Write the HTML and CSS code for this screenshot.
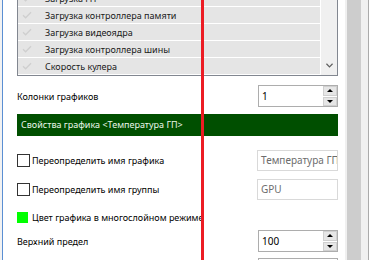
FILE: index.html
```html
<!DOCTYPE html>
<html lang="ru">
<head>
  <meta charset="UTF-8" />
  <meta name="viewport" content="width=device-width, initial-scale=1.0" />
  <title>Свойства графика</title>
  <link rel="stylesheet" href="styles.css">
</head>
<body>
  <div class="window">
    <div class="frame-left"></div>

    <div class="panel">
      <div class="list">
        <div class="list-rows">
          <div class="list-row">
            <svg class="tick" viewBox="0 0 10 8"><path d="M1 4.2 L3.6 6.8 L9 1.2" /></svg>
            <span>Загрузка ГП</span>
          </div>
          <div class="list-row">
            <svg class="tick" viewBox="0 0 10 8"><path d="M1 4.2 L3.6 6.8 L9 1.2" /></svg>
            <span>Загрузка контроллера памяти</span>
          </div>
          <div class="list-row">
            <svg class="tick" viewBox="0 0 10 8"><path d="M1 4.2 L3.6 6.8 L9 1.2" /></svg>
            <span>Загрузка видеоядра</span>
          </div>
          <div class="list-row">
            <svg class="tick" viewBox="0 0 10 8"><path d="M1 4.2 L3.6 6.8 L9 1.2" /></svg>
            <span>Загрузка контроллера шины</span>
          </div>
          <div class="list-row">
            <svg class="tick" viewBox="0 0 10 8"><path d="M1 4.2 L3.6 6.8 L9 1.2" /></svg>
            <span>Скорость кулера</span>
          </div>
        </div>
        <div class="list-scroll">
          <svg class="chevron" viewBox="0 0 8 5"><path d="M0.5 0.5 L4 4 L7.5 0.5" /></svg>
        </div>
      </div>

      <div class="field-row row-columns">
        <span class="label">Колонки графиков</span>
        <div class="spin">
          <span class="spin-value">1</span>
          <div class="spin-buttons">
            <span class="spin-btn"><span class="arrow-up"></span></span>
            <span class="spin-btn"><span class="arrow-down"></span></span>
          </div>
        </div>
      </div>

      <div class="section-header">Свойства графика &lt;Температура ГП&gt;</div>

      <div class="field-row row-name">
        <label class="check"><span class="box"></span>Переопределить имя графика</label>
        <div class="textbox disabled">Температура ГП</div>
      </div>

      <div class="field-row row-group">
        <label class="check"><span class="box"></span>Переопределить имя группы</label>
        <div class="textbox disabled">GPU</div>
      </div>

      <div class="field-row row-color">
        <span class="check"><span class="swatch"></span>Цвет графика в многослойном режиме</span>
      </div>

      <div class="field-row row-upper">
        <span class="label">Верхний предел</span>
        <div class="spin">
          <span class="spin-value">100</span>
          <div class="spin-buttons">
            <span class="spin-btn"><span class="arrow-up"></span></span>
            <span class="spin-btn"><span class="arrow-down"></span></span>
          </div>
        </div>
      </div>

      <div class="field-row row-next">
        <span class="label"></span>
        <div class="spin"></div>
      </div>
    </div>

    <div class="vscroll"><div class="thumb"></div></div>
    <div class="frame-right"></div>

    <div class="red-line"></div>
  </div>
</body>
</html>
```

FILE: styles.css
```css
body {
  margin: 0;
  background: #fff;
  font-family: 'Noto Sans', sans-serif;
  font-size: 9px;
  color: #000;
}
.window {
  position: relative;
  display: flex;
  height: 260px;
  overflow: hidden;
}
.frame-left {
  width: 2px;
  background: #f2f2f2;
  border-right: 1px solid #5b8fd3;
}
.panel {
  width: 321px;
  padding: 0 7px 0 14px;
  display: flex;
  flex-direction: column;
}

/* list with counters */
.list {
  margin-top: -11px;
  height: 85px;
  display: flex;
  border: 1px solid #828790;
  background: #fff;
  flex-shrink: 0;
}
.list-rows {
  flex: 1;
}
.list-row {
  height: 16px;
  margin-bottom: 1px;
  margin-right: 1px;
  background: #e5e5e5;
  display: flex;
  align-items: center;
  color: #1a1a1a;
}
.tick {
  width: 10px;
  height: 8px;
  margin: 0 13px 0 4px;
  fill: none;
  stroke: #cfcfcf;
  stroke-width: 1.3;
}
.list-scroll {
  width: 16px;
  background: #f0f0f0;
  display: flex;
  align-items: flex-end;
  justify-content: center;
}
.chevron {
  width: 7px;
  height: 5px;
  margin-bottom: 7px;
  fill: none;
  stroke: #606060;
  stroke-width: 1.4;
}

/* form rows */
.field-row {
  display: flex;
  align-items: center;
  justify-content: space-between;
  flex-shrink: 0;
}
.row-columns { margin-top: 9px; height: 22px; }
.row-name { margin-top: 14px; height: 21px; }
.row-group { margin-top: 8px; height: 21px; }
.row-color { margin-top: 7px; height: 20px; }
.row-upper { margin-top: 3px; height: 22px; }
.row-next { margin-top: 6px; height: 22px; }

.section-header {
  margin-top: 7px;
  height: 22px;
  line-height: 22px;
  padding-left: 4px;
  background: #004f00;
  color: #eaf6ea;
  flex-shrink: 0;
}

.spin {
  width: 78px;
  height: 20px;
  border: 1px solid #adadad;
  background: #fff;
  display: flex;
  align-items: center;
}
.spin-value {
  flex: 1;
  padding-left: 3px;
  font-size: 10px;
}
.spin-buttons {
  width: 14px;
  height: 20px;
  display: flex;
  flex-direction: column;
  gap: 1px;
}
.spin-btn {
  flex: 1;
  background: #e6e6e6;
  border: 1px solid #d0d0d0;
  display: flex;
  align-items: center;
  justify-content: center;
}
.arrow-up {
  border-left: 3px solid transparent;
  border-right: 3px solid transparent;
  border-bottom: 3px solid #000;
}
.arrow-down {
  border-left: 3px solid transparent;
  border-right: 3px solid transparent;
  border-top: 3px solid #000;
}

.textbox {
  width: 76px;
  height: 19px;
  line-height: 19px;
  border: 1px solid #d9d9d9;
  padding-left: 3px;
  font-size: 10px;
  white-space: nowrap;
  overflow: hidden;
}
.textbox.disabled {
  color: #6d6d6d;
}

.check {
  display: flex;
  align-items: center;
  white-space: nowrap;
}
.box {
  width: 11px;
  height: 11px;
  border: 1px solid #333;
  background: #fff;
  margin-right: 2px;
}
.swatch {
  width: 11px;
  height: 11px;
  background: #00ff00;
  margin-right: 4px;
}

/* outer window scrollbar */
.vscroll {
  width: 17px;
  background: #f0f0f0;
  display: flex;
  justify-content: center;
}
.thumb {
  width: 14px;
  background: #cdcdcd;
}
.frame-right {
  width: 6px;
  background: #f0f0f0;
  border-right: 1px solid #aaaaaa;
}

/* annotation line drawn over the dialog */
.red-line {
  position: absolute;
  left: 201px;
  top: 0;
  width: 3px;
  height: 260px;
  background: #ec1c24;
}
```
